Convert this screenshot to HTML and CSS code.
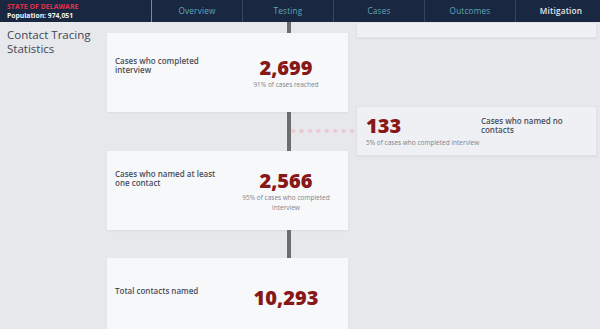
FILE: index.html
```html
<!DOCTYPE html>
<html lang="en">
<head>
  <meta charset="UTF-8">
  <meta name="viewport" content="width=device-width, initial-scale=1.0">
  <link rel="stylesheet" href="styles.css">
  <title>Contact Tracing Statistics</title>
</head>
<body>

<header class="topbar">
  <div class="state">
    <div class="state-name">STATE OF DELAWARE</div>
    <div class="population">Population: 974,051</div>
  </div>
  <nav class="tabs">
    <a class="tab first">Overview</a>
    <a class="tab">Testing</a>
    <a class="tab">Cases</a>
    <a class="tab">Outcomes</a>
    <a class="tab active">Mitigation</a>
  </nav>
</header>

<main class="page">
  <aside class="page-title">Contact Tracing Statistics</aside>

  <section class="timeline">
    <div class="connector top"></div>
    <div class="stat-card">
      <div class="stat-row">
        <div class="stat-label">Cases who completed interview</div>
        <div class="stat-value">
          <div class="stat-number">2,699</div>
          <div class="stat-note">91% of cases reached</div>
        </div>
      </div>
    </div>
    <div class="connector long"></div>
    <div class="stat-card">
      <div class="stat-row">
        <div class="stat-label">Cases who named at least one contact</div>
        <div class="stat-value">
          <div class="stat-number">2,566</div>
          <div class="stat-note">95% of cases who completed interview</div>
        </div>
      </div>
    </div>
    <div class="connector mid"></div>
    <div class="stat-card">
      <div class="stat-row">
        <div class="stat-label">Total contacts named</div>
        <div class="stat-value">
          <div class="stat-number">10,293</div>
        </div>
      </div>
    </div>
  </section>

  <section class="branches">
    <div class="branch-card stub"></div>
    <div class="branch-row">
      <div class="dots"></div>
      <div class="branch-card">
        <div class="branch-value">
          <div class="stat-number">133</div>
          <div class="stat-note">5% of cases who completed interview</div>
        </div>
        <div class="stat-label">Cases who named no contacts</div>
      </div>
    </div>
  </section>
</main>

</body>
</html>
```

FILE: styles.css
```css
body {
  margin: 0;
  height: 329px;
  overflow: hidden;
  background: #e7e8eb;
  font-family: "Open Sans", "Liberation Sans", sans-serif;
}

.topbar {
  display: flex;
  height: 22px;
  background: #1a2740;
}

.state {
  flex: none;
  width: 144px;
  padding: 3px 0 0 7px;
  line-height: 8px;
  font-weight: 700;
}

.state-name {
  font-size: 6.8px;
  color: #e0304c;
  letter-spacing: 0.1px;
}

.population {
  margin-top: 1px;
  font-size: 6.8px;
  color: #f2f4f7;
}

.tabs {
  display: flex;
  flex: 1;
}

.tab {
  flex: none;
  width: 90px;
  border-left: 1px solid #35455d;
  color: #5ca9bb;
  font-size: 8.2px;
  font-weight: 500;
  line-height: 22px;
  text-align: center;
  letter-spacing: 0.2px;
}

.tab.first {
  border-left-color: #5d97ac;
}

.tab.active {
  flex: 1;
  color: #e4e8ee;
  font-weight: 600;
}

.page {
  display: flex;
  height: 307px;
  overflow: hidden;
}

.page-title {
  flex: none;
  width: 100px;
  padding: 6px 0 0 7px;
  font-size: 11.5px;
  line-height: 14px;
  color: #3e4758;
}

.timeline {
  display: flex;
  flex-direction: column;
  flex: none;
  width: 241px;
}

.connector {
  width: 4px;
  margin-left: 180px;
  background: #6d6d70;
  flex: none;
}

.connector.top { height: 11px; }
.connector.long { height: 39px; }
.connector.mid { height: 28px; }

.stat-card {
  display: flex;
  align-items: center;
  height: 79px;
  flex: none;
  padding: 0 2px 0 8px;
  background: #f7f8fa;
  box-shadow: 0 1px 2px rgba(0, 0, 0, 0.06);
}

.stat-row {
  display: flex;
  align-items: flex-start;
}

.stat-label {
  width: 111px;
  font-size: 8px;
  line-height: 9px;
  font-weight: 600;
  color: #4a4f5b;
}

.stat-value {
  width: 120px;
  text-align: center;
}

.stat-number {
  font-size: 20px;
  line-height: 24px;
  font-weight: 800;
  color: #871818;
}

.stat-note {
  max-width: 96px;
  margin: 0 auto;
  font-size: 6.5px;
  line-height: 9.5px;
  color: #80838a;
}

.branches {
  flex: 1;
}

.branch-card {
  display: flex;
  align-items: center;
  width: 241px;
  height: 50px;
  box-sizing: border-box;
  padding-left: 9px;
  background: #eff0f3;
  border: 1px solid #e1e2e6;
  box-shadow: 0 1px 2px rgba(0, 0, 0, 0.05);
}

.branch-card.stub {
  height: 16px;
  margin-left: 8px;
}

.branch-row {
  display: flex;
  align-items: center;
  margin-top: 68px;
}

.dots {
  flex: none;
  width: 67px;
  height: 6px;
  margin-left: -59px;
  background: radial-gradient(circle, #ebcbd0 1.9px, transparent 2.3px) 0 0 / 8.4px 6px repeat-x;
}

.branch-card .stat-label {
  width: 100px;
  align-self: flex-start;
  margin-top: 9px;
}

.branch-value {
  width: 115px;
}

.branch-value .stat-note {
  max-width: none;
  margin: 0;
}
```
